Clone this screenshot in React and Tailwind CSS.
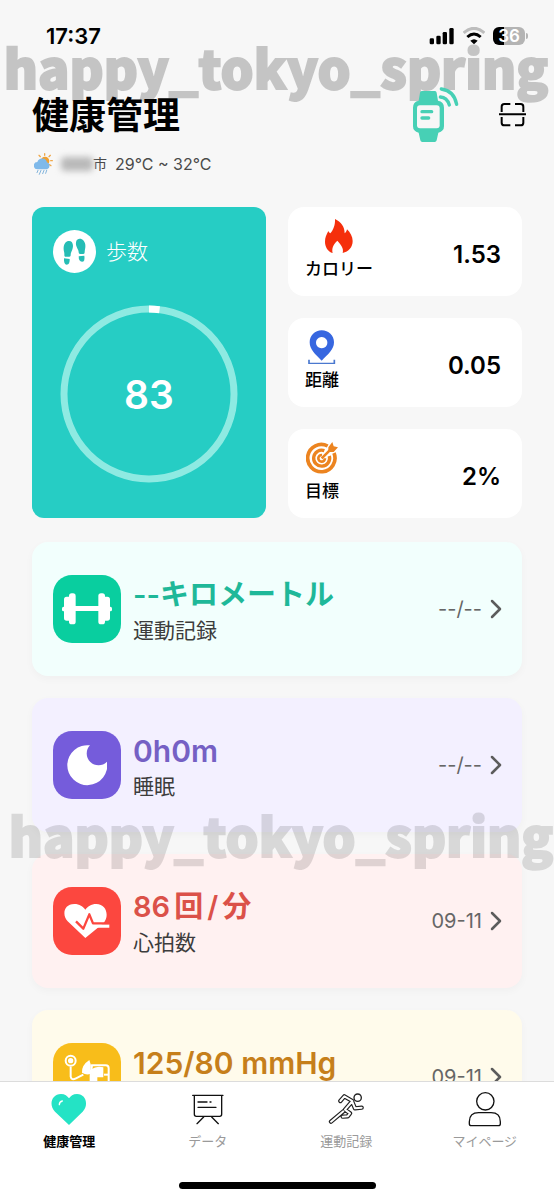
import React from "react";

const stats = [
  { label: "カロリー", value: "1.53", icon: FlameIcon },
  { label: "距離", value: "0.05", icon: PinIcon },
  { label: "目標", value: "2%", icon: TargetIcon },
];

const records = [
  { title: ["--キロメートル"], sub: "運動記録", date: "--/--", icon: DumbbellIcon, card: "bg-[#f2fffd]", tile: "bg-[#09ce9f]", text: "text-[29px] text-[#1fb899]" },
  { title: ["0h0m"], sub: "睡眠", date: "--/--", icon: MoonIcon, card: "bg-[#f3f0ff]", tile: "bg-[#755cdb]", text: "text-[30px] text-[#7560c4]" },
  { title: ["86", "回", "/", "分"], sub: "心拍数", date: "09-11", icon: PulseIcon, card: "bg-[#fff1f1]", tile: "bg-[#fc473f]", text: "text-[29px] text-[#db5149]" },
  { title: ["125/80 mmHg"], sub: "血圧", date: "09-11", icon: PressureIcon, card: "bg-[#fffbeb]", tile: "bg-[#f8bd1a]", text: "text-[30px] text-[#c67f1b]" },
];

const tabs = [
  { label: "健康管理", icon: HeartIcon, active: true },
  { label: "データ", icon: BoardIcon },
  { label: "運動記録", icon: RunnerIcon },
  { label: "マイページ", icon: PersonIcon },
];

function SignalIcon() {
  return (
    <svg width="26" height="18" viewBox="465 79 78 54" aria-hidden="true">
      <rect x="467" y="113" width="13" height="18" rx="4" />
      <rect x="487" y="105" width="13" height="26" rx="4" />
      <rect x="506" y="94" width="13" height="37" rx="4" />
      <rect x="526" y="82" width="13" height="49" rx="4" />
    </svg>
  );
}

function WifiIcon() {
  return (
    <svg width="22" height="18" viewBox="565 79 66 54" fill="none" aria-hidden="true">
      <path d="M567 97 Q598 69 629 97" stroke="#bdbdbd" strokeWidth="9" />
      <path d="M578 109 Q598 91 618 109" stroke="#000" strokeWidth="9" />
      <path d="M587 120 Q598 111 609 120 L598 131 Z" fill="#000" />
    </svg>
  );
}

function Battery() {
  return (
    <div className="flex items-center gap-px">
      <div className="flex h-[18px] w-8 items-center justify-center rounded-md bg-[linear-gradient(to_right,#000_35%,#b4b4b4_35%)] text-[17px] leading-none font-semibold text-white">
        36
      </div>
      <div className="h-1.5 w-0.5 rounded-r-full bg-[#b4b4b4]" />
    </div>
  );
}

function WeatherIcon() {
  return (
    <svg width="19" height="22" viewBox="104 461 57 66" fill="none" aria-hidden="true">
      <circle cx="137" cy="485" r="13" fill="#f0a030" />
      <path d="M136 468v-5M123 472l-4-4M149 472l4-4M154 484h5M151 496l4 3" stroke="#f0a84a" strokeWidth="4" strokeLinecap="round" />
      <path d="M115 510a11 11 0 0 1-1-22a15 15 0 0 1 29 1a11 11 0 0 1 0 21z" fill="#7fb9ea" />
      <path d="M116 513l-3 7M125 513l-5 12M134 513l-4 10M142 513l-3 9" stroke="#82b4dc" strokeWidth="3" strokeLinecap="round" />
    </svg>
  );
}

function WatchIcon() {
  return (
    <svg width="47" height="57" viewBox="420 257 141 171" fill="none" aria-hidden="true">
      <path d="M449 272h40q4 0 5 5l4 24q18 3 18 21v56q0 15-17 19l-5 23q-1 5-6 5h-37q-5 0-6-5l-5-23q-17-4-17-19v-56q0-18 17-21l4-24q1-5 5-5z" fill="#47d0b5" />
      <rect x="435" y="315" width="68" height="69" rx="9" fill="#f7f7f7" />
      <path d="M450 334h29M450 353h20" stroke="#47d0b5" strokeWidth="10" strokeLinecap="round" />
      <path d="M505 290q20 1 27 24" stroke="#47d0b5" strokeWidth="10" strokeLinecap="round" />
      <path d="M508 266q38 5 46 46" stroke="#47d0b5" strokeWidth="10" strokeLinecap="round" />
    </svg>
  );
}

function ScanIcon() {
  return (
    <svg width="27" height="25" viewBox="681 308 81 75" fill="none" stroke="#000" strokeWidth="6" aria-hidden="true">
      <path d="M689 338v-16q0-8 8-8h18M729 314h17q8 0 8 8v16M689 353v17q0 8 8 8h18M729 378h17q8 0 8-8v-17M681 345h81" />
    </svg>
  );
}

function FeetIcon() {
  return (
    <svg width="43" height="43" viewBox="99 105 129 129" aria-hidden="true">
      <circle cx="163.500" cy="169.500" r="64.500" fill="#fff" />
      <g fill="#25bdb5">
        <path d="M147 138c10 0 14 10 11 22c-2 9-6 13-6 20c0 4-1 5-4 5h-11c-3 0-4-2-4-6c1-7-3-11-2-22c1-11 7-19 16-19z" />
        <path d="M132 190l17 2q1 17-9 17q-9 0-8-19z" />
        <path d="M179 131c-10 0-13 11-10 22c3 9 7 12 7 19c0 4 2 5 4 5h10c3 0 4-2 4-6c0-7 3-12 2-22c-1-10-8-18-17-18z" />
        <path d="M176 184l17-2q3 18-7 18q-10 0-10-16z" />
      </g>
    </svg>
  );
}

function FlameIcon() {
  return (
    <svg width="28" height="34" viewBox="134 55 84 102" aria-hidden="true">
      <path d="M164 55c18 9 29 22 29 43c4-3 6-7 7-12c10 10 17 22 17 35c0 19-12 32-30 36c4-14-5-25-16-37c-13 13-17 23-14 37c-14-4-23-18-23-34c0-12 4-20 10-32c2 4 4 6 6 7c9-11 15-25 14-43z" fill="#f52f0c" />
    </svg>
  );
}

function PinIcon() {
  return (
    <svg width="28" height="34" viewBox="86 386 84 102" aria-hidden="true">
      <path fillRule="evenodd" d="M127 387c21 0 37 16 37 36c0 22-18 36-37 55c-19-19-36-33-36-55c0-20 16-36 36-36zM127 407a17 17 0 1 0 .1 0z" fill="#3767e0" />
      <path d="M89 475v12h76v-12" fill="none" stroke="#4a78cf" strokeWidth="5" />
    </svg>
  );
}

function TargetIcon() {
  return (
    <svg width="32" height="34" viewBox="78 271 96 102" fill="none" stroke="#ec8420" aria-hidden="true">
      <path d="M143 286a41 41 0 1 0 19 21" strokeWidth="11" />
      <path d="M133 300a24 24 0 1 0 15 16" strokeWidth="10" />
      <path d="M126 313a10 10 0 1 0 9 10" strokeWidth="8" />
      <path d="M125 323l27-27" strokeWidth="8" />
      <path d="M145 290l12-16l4 13l13 3l-13 14h-16z" fill="#ec8420" stroke="none" />
    </svg>
  );
}

function DumbbellIcon() {
  return (
    <svg width="50" height="32" viewBox="126 176 150 96" fill="#fff" aria-hidden="true">
      <rect x="160" y="215" width="80" height="15" />
      <rect x="147" y="177" width="20" height="93" rx="8" />
      <rect x="132" y="187" width="24" height="72" rx="8" />
      <rect x="126" y="217" width="12" height="14" rx="5" />
      <rect x="235" y="177" width="20" height="93" rx="8" />
      <rect x="246" y="187" width="24" height="72" rx="8" />
      <rect x="264" y="217" width="12" height="14" rx="5" />
    </svg>
  );
}

function MoonIcon() {
  return (
    <svg width="40" height="41" viewBox="141 166 120 123" fill="#fff" aria-hidden="true">
      <path d="M210 167A60 60 0 1 0 261 216A35 35 0 0 1 210 167z" />
    </svg>
  );
}

function PulseIcon() {
  return (
    <svg width="46" height="34" viewBox="132 165 138 102" fill="none" aria-hidden="true">
      <path d="M196 267l-53-50c-17-17-13-52 20-52c16 0 26 8 33 17c7-9 17-17 33-17c30 0 40 35 22 57z" fill="#fff" />
      <path d="M218 236h50v-10h-47z" fill="#fff" />
      <path d="M168 217l22 22l18-43l11 27h50" stroke="#fc473f" strokeWidth="7" strokeLinejoin="round" />
    </svg>
  );
}

function PressureIcon() {
  return (
    <svg width="46" height="46" viewBox="192 166 138 138" fill="none" stroke="#fff" strokeWidth="6" aria-hidden="true">
      <circle cx="212" cy="186" r="15" />
      <circle cx="212" cy="186" r="5" fill="#fff" />
      <path d="M212 204v30q2 12 16 5l22-11" />
      <path d="M246 222q-2-22 22-38q7 14 4 29q12 2 0 12q-12 6-26-3z" fill="#fff" stroke="none" />
      <path d="M276 200h41q9 0 9 9v70q0 9-9 9h-36q-9 0-9-9v-50z" />
      <path d="M274 212q16-12 36-6v30h-18v18h-20z" fill="#fff" stroke="none" />
      <path d="M312 228h14" />
    </svg>
  );
}

function ChevronIcon() {
  return (
    <svg width="12" height="20" viewBox="0 0 12 20" fill="none" stroke="#5c5c5c" strokeWidth="2.5" strokeLinecap="round" strokeLinejoin="round" aria-hidden="true">
      <path d="M2 2l8 8l-8 8" />
    </svg>
  );
}

function HeartIcon() {
  return (
    <svg width="36" height="36" viewBox="155 273 108 108" fill="none" aria-hidden="true">
      <path d="M209 375l-42-40c-20-20-10-53 18-53c12 0 19 6 24 13c5-7 12-13 24-13c27 0 36 33 17 53z" fill="#24e3c5" />
      <path d="M180 314q0-9 9-11" stroke="#fff" strokeWidth="4" strokeLinecap="round" />
    </svg>
  );
}

function BoardIcon() {
  return (
    <svg width="36" height="36" viewBox="571 273 108 108" fill="none" stroke="#111" strokeWidth="4" strokeLinecap="round" aria-hidden="true">
      <path d="M579 286h91M584 286v57q0 6 6 6h70q6 0 6-6v-57M595 306h27M631 306h3M595 322h54M612 351l-20 20M636 351l20 20" />
    </svg>
  );
}

function RunnerIcon() {
  const limbs = "M236 303l-24-14l-12 14M236 306l8 19l20-2M209 334l-37 31M234 306l-20 23l15 11l-7 9l-15 1";
  return (
    <svg width="36" height="36" viewBox="163 273 108 108" fill="none" strokeLinecap="round" strokeLinejoin="round" aria-hidden="true">
      <path d={limbs} stroke="#222" strokeWidth="13" />
      <path d={limbs} stroke="#fff" strokeWidth="6" />
      <circle cx="252" cy="293" r="11" fill="#fff" stroke="#222" strokeWidth="4" />
    </svg>
  );
}

function PersonIcon() {
  return (
    <svg width="36" height="36" viewBox="580 273 108 108" fill="none" stroke="#111" strokeWidth="4" aria-hidden="true">
      <circle cx="635" cy="304" r="26" />
      <path d="M587 371v-6q0-27 28-27h37q28 0 28 27v6q0 6-6 6h-81q-6 0-6-6z" />
    </svg>
  );
}

function Watermark({ className }) {
  return (
    <div aria-hidden="true" className={`pointer-events-none absolute inset-x-0 flex justify-center font-['Noto_Sans_CJK_JP',sans-serif] text-[52px] leading-[72px] font-black whitespace-nowrap text-black [-webkit-text-stroke:2px_black] ${className}`}>
      happy_tokyo_spring
    </div>
  );
}

function StepsCard() {
  const r = 85;
  const length = 2 * Math.PI * r;
  return (
    <section className="flex flex-col gap-8 rounded-xl bg-[#26cdc4] px-[21px] pt-[23px] text-white">
      <h2 className="flex items-center gap-2.5 text-[21px] font-light">
        <FeetIcon />
        歩数
      </h2>
      <div className="grid place-items-center self-center">
        <svg className="col-start-1 row-start-1 -rotate-90" width="178" height="178" viewBox="0 0 178 178" fill="none" strokeWidth="7" aria-hidden="true">
          <circle cx="89" cy="89" r={r} stroke="#8eeae2" />
          <circle cx="89" cy="89" r={r} stroke="#fff" strokeDasharray={`${length * 0.02} ${length}`} />
        </svg>
        <span className="col-start-1 row-start-1 text-[39px] leading-none font-semibold">83</span>
      </div>
    </section>
  );
}

export default function App() {
  return (
    <div className="relative flex h-screen flex-col overflow-hidden bg-[#f7f7f7] font-[Inter,'Noto_Sans_CJK_JP',sans-serif] text-black">
      <Watermark className="top-[31px] pr-0.5 opacity-20" />

      <div className="relative flex items-center justify-between pt-6 pr-[26px] pl-[46px]">
        <time className="text-[22px] leading-6 font-semibold">17:37</time>
        <div className="flex items-center gap-2">
          <SignalIcon />
          <WifiIcon />
          <Battery />
        </div>
      </div>

      <main className="relative flex min-h-0 flex-1 flex-col overflow-y-auto px-8 [scrollbar-width:none]">
        <header className="flex shrink-0 items-center justify-between pt-[34px]">
          <h1 className="pt-1 text-[37px] leading-[60px] font-bold">健康管理</h1>
          <div className="-mr-1 flex items-center gap-10">
            <button type="button" aria-label="ウォッチ" className="block">
              <WatchIcon />
            </button>
            <button type="button" aria-label="スキャン" className="block">
              <ScanIcon />
            </button>
          </div>
        </header>

        <p className="flex shrink-0 items-center pt-1.5 pl-0.5 text-base leading-6 text-[#4a4a4a]">
          <WeatherIcon />
          <span className="ml-2 h-3.5 w-8 rounded bg-[#b9b9b9] blur-[3px]" />
          <span className="text-sm">市</span>
          <span className="ml-2">29°C ~ 32°C</span>
        </p>

        <div className="mt-[31px] grid shrink-0 grid-cols-2 gap-[22px]">
          <StepsCard />
          <div className="flex flex-col gap-[22px]">
            {stats.map(({ label, value, icon: Icon }) => (
              <section key={label} className="flex h-[89px] items-center justify-between rounded-2xl bg-white pr-[21px] pl-[17px]">
                <h2 className="flex flex-col items-center gap-1 pb-1 text-[17px] leading-6 font-medium">
                  <Icon />
                  {label}
                </h2>
                <span className="pt-1.5 text-2xl font-semibold">{value}</span>
              </section>
            ))}
          </div>
        </div>

        <div className="mt-6 flex shrink-0 flex-col gap-[22px] pb-6">
          {records.map(({ title, sub, date, icon: Icon, card, tile, text }) => (
            <a key={sub} href="#" className={`flex h-[134px] items-center rounded-2xl pr-5 pl-[21px] shadow-[0_3px_8px_rgba(0,0,0,0.03)] ${card}`}>
              <span className={`grid size-[68px] place-items-center rounded-[19px] ${tile}`}>
                <Icon />
              </span>
              <span className="ml-3 flex flex-1 flex-col pt-1">
                <span className={`flex gap-1 leading-10 font-semibold ${text}`}>
                  {title.map((part) => (
                    <span key={part}>{part}</span>
                  ))}
                </span>
                <span className="text-[21px] leading-8 text-[#3c3c3c]">{sub}</span>
              </span>
              <span className="mr-2 text-xl text-[#666]">{date}</span>
              <ChevronIcon />
            </a>
          ))}
        </div>
      </main>

      <nav className="shrink-0 border-t border-[#dcdcdc] bg-white pb-[11px]">
        <div className="grid grid-cols-4 pt-[9px]">
          {tabs.map(({ label, icon: Icon, active }) => (
            <a key={label} href="#" aria-current={active ? "page" : undefined} className={`flex flex-col items-center gap-1 text-[13px] leading-5 ${active ? "font-semibold text-black" : "text-[#9a9a9a]"}`}>
              <Icon />
              {label}
            </a>
          ))}
        </div>
        <div className="mx-auto mt-[31px] h-[7px] w-[197px] rounded-full bg-black" />
      </nav>

      <Watermark className="top-[799px] pl-2 opacity-12" />
    </div>
  );
}
